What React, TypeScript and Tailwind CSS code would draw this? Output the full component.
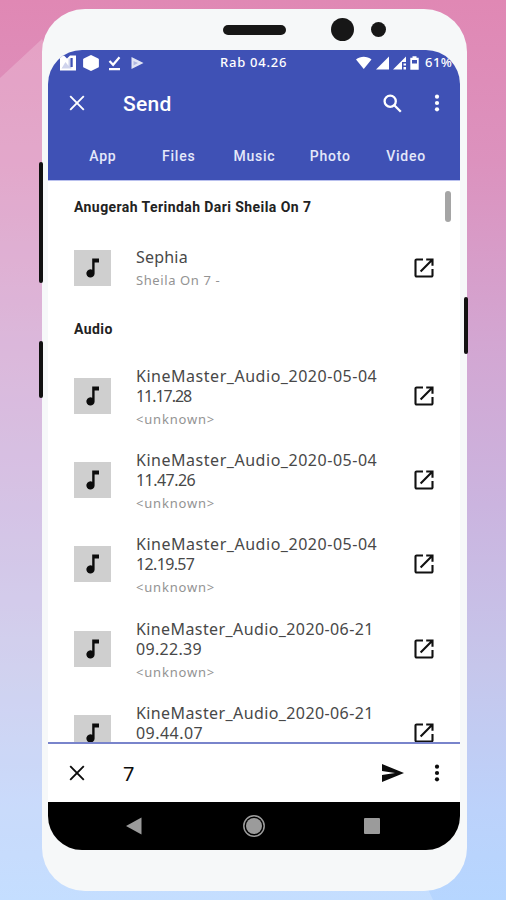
import React from "react";

const songs = [
  { title: "KineMaster_Audio_2020-05-04", time: "11.17.28", artist: "<unknown>", titleSpacing: "tracking-[0.53px]", timeSpacing: "tracking-[-1.05px]" },
  { title: "KineMaster_Audio_2020-05-04", time: "11.47.26", artist: "<unknown>", titleSpacing: "tracking-[0.53px]", timeSpacing: "tracking-[-0.55px]" },
  { title: "KineMaster_Audio_2020-05-04", time: "12.19.57", artist: "<unknown>", titleSpacing: "tracking-[0.53px]", timeSpacing: "tracking-[-0.65px]" },
  { title: "KineMaster_Audio_2020-06-21", time: "09.22.39", artist: "<unknown>", titleSpacing: "tracking-[0.4px]", timeSpacing: "tracking-[0.3px]" },
  { title: "KineMaster_Audio_2020-06-21", time: "09.44.07", artist: "", titleSpacing: "tracking-[0.4px]", timeSpacing: "tracking-[0.45px]" },
];

const tabs = ["App", "Files", "Music", "Photo", "Video"];

const CloseIcon = () => (
  <svg viewBox="0 0 16 16" className="w-4 h-4 shrink-0" fill="none" stroke="currentColor" strokeWidth="1.9">
    <path d="M1.2 1.2 14.8 14.8M14.8 1.2 1.2 14.8" />
  </svg>
);

const MoreIcon = () => (
  <svg viewBox="0 0 6 18" className="w-1.5 h-[18px] shrink-0" fill="currentColor">
    <circle cx="3" cy="2.7" r="2.1" />
    <circle cx="3" cy="9" r="2.1" />
    <circle cx="3" cy="15.3" r="2.1" />
  </svg>
);

const NoteTile = () => (
  <div className="w-[37px] h-9 bg-[#cfcfcf] flex items-center justify-center shrink-0">
    <svg viewBox="0 0 14 20" className="w-3.5 h-5" fill="#0c0c0c">
      <path d="M6.2.6h6.8v4H8.6v10.8a4.1 4.1 0 1 1-2.4-3.7z" />
    </svg>
  </div>
);

const OpenIcon = () => (
  <svg viewBox="0 0 20 20" className="w-5 h-5 shrink-0" fill="none" stroke="#111" strokeWidth="2.1">
    <path d="M9 1.5H2.6a1.1 1.1 0 0 0-1.1 1.1v14.8a1.1 1.1 0 0 0 1.1 1.1h14.8a1.1 1.1 0 0 0 1.1-1.1V11" />
    <path d="M12.2 1.5h6.3v6.3M18 2 6.6 13.4" />
  </svg>
);

const StatusBar = () => (
  <div className="h-6 shrink-0 flex items-center pt-px text-white font-['Noto_Sans'] text-[13px] font-medium">
    <div className="w-[172px] flex items-center pl-[11px]">
      <svg viewBox="0 0 90 18" className="w-[90px] h-[18px]" fill="currentColor">
        {/* photo notification */}
        <path d="M1 1.5h4l3 3 3-3h6v15H1z" />
        <path d="M2.5 14.5 6.5 8l3 4V4.5h3v10z" fill="#3f51b5" opacity=".25" />
        <path d="M11.5 4h2.2v9h-2.2z" fill="#3f51b5" />
        <path d="m32 2.2 6.7 3.4v6.8L32 15.8l-6.7-3.4V5.6z" stroke="currentColor" strokeWidth="2.4" strokeLinejoin="round" />
        <path d="m50.5 7 3.6 3.8 6.4-7.6" fill="none" stroke="currentColor" strokeWidth="2.2" />
        <path d="M50 14h11v2.3H50z" />
        <path d="m72.5 3 12 6-12 6z" opacity=".85" />
        <path d="m74.5 7 4.5 2-4.5 2.5z" fill="#3f51b5" opacity=".3" />
      </svg>
    </div>
    <span className="w-[135px] tracking-[0.75px]">Rab 04.26</span>
    <svg viewBox="0 0 66 16" className="w-[66px] h-4 shrink-0" fill="currentColor">
      <path d="M1 4.5C5.5.8 12 .8 16.500 4.5L8.75 14z" />
      <path d="M21 14.5 34 1.5v13z" />
      <path d="M38 14.5 51 1.5V7h-4v7.5z" />
      <path d="M48.5 8.5H51v2h-2.5zM48.5 12H51v2.5h-2.5z" />
      <path d="M57.5 1.2h4v1.6h2.2v12h-8.4v-12h2.2z" />
      <path d="M57 5h5v3.5h-5z" fill="#3f51b5" />
    </svg>
    <span className="ml-1 tracking-[0.5px]">61%</span>
  </div>
);

type Song = (typeof songs)[number];

const SongRow = ({ title, time, artist, titleSpacing, timeSpacing }: Song) => (
  <div className="h-[84.2px] shrink-0 flex items-center px-[26px]">
    <NoteTile />
    <div className="flex-1 pl-[25px] pt-0.5 font-['Noto_Sans']">
      <div className={`text-base leading-[21px] text-[#484848] whitespace-nowrap ${titleSpacing}`}>{title}</div>
      <div className={`text-base leading-[18px] text-[#484848] ${timeSpacing}`}>{time}</div>
      <div className="h-[18px] text-[13px] leading-[18px] mt-[5px] text-[#939393] tracking-[0.8px]">{artist}</div>
    </div>
    <OpenIcon />
  </div>
);

const App = () => {
  return (
    <div className="relative w-[506px] h-[900px] overflow-hidden pt-[9px] pl-[42px] bg-[linear-gradient(to_bottom,#e088b4_0%,#dc92be_18%,#d3a6d2_38%,#cbb4df_56%,#c6c6eb_74%,#bcd2fb_90%,#b6d6ff_100%)]">
      {/* lighter diagonal sheen */}
      <div className="absolute inset-0 bg-white/20 [clip-path:polygon(0_78px,42px_39px,433px_900px,0_900px)]"></div>

      {/* hardware buttons */}
      <div className="absolute left-[39px] top-[162px] w-1 h-[121px] rounded-sm bg-[#111] z-10"></div>
      <div className="absolute left-[39px] top-[341px] w-1 h-[57px] rounded-sm bg-[#111] z-10"></div>
      <div className="absolute left-[464px] top-[297px] w-1 h-[57px] rounded-sm bg-[#111] z-10"></div>

      <div className="relative w-[425px] h-[882px] rounded-[43px] bg-[#f6f8f9] pl-1.5 flex flex-col">
        <div className="h-[41px] shrink-0 flex items-center pl-[175px]">
          <div className="w-[63px] h-2.5 rounded-full bg-[#171717]"></div>
          <div className="w-[23px] h-[23px] ml-[45px] rounded-full bg-[#171717]"></div>
          <div className="w-[15px] h-[15px] ml-[17px] rounded-full bg-[#171717]"></div>
        </div>

        <div className="w-[412px] h-[800px] rounded-[34px] overflow-hidden bg-white flex flex-col">
          <div className="h-[130px] shrink-0 bg-[#3f51b5] flex flex-col text-white">
            <StatusBar />
            <div className="h-[58px] flex items-center pl-[21px] pr-5">
              <CloseIcon />
              <h1 className="flex-1 pl-[38px] pt-0.5 font-[Roboto] font-medium text-[21px] leading-7 tracking-[0.3px]">Send</h1>
              <svg viewBox="0 0 19 19" className="w-[19px] h-[19px] mr-8" fill="none" stroke="currentColor" strokeWidth="2.3">
                <circle cx="7.2" cy="7.2" r="5.6" />
                <path d="m11.3 11.3 6.5 6.5" />
              </svg>
              <MoreIcon />
            </div>
            <div className="flex-1 flex items-center pl-[17px] pr-4">
              {tabs.map((tab) => (
                <span key={tab} className="flex-1 text-center font-[Roboto] font-medium text-sm tracking-[0.75px] text-[#e4e8fa]">
                  {tab}
                </span>
              ))}
            </div>
          </div>

          <div className="relative h-[562px] shrink-0 overflow-hidden border-t border-[#b9c0ee] flex flex-col">
            <div className="absolute right-[9.5px] top-[10px] w-1.5 h-[31px] rounded-full bg-[#a5a5a5]"></div>
            <h2 className="h-[52px] shrink-0 flex items-center pl-[26px] font-[Roboto] font-bold text-sm text-[#222] tracking-[0.42px]">
              Anugerah Terindah Dari Sheila On 7
            </h2>
            <div className="h-[70px] shrink-0 flex items-center px-[26px]">
              <NoteTile />
              <div className="flex-1 pl-[25px] font-['Noto_Sans']">
                <div className="text-base leading-5 text-[#484848] tracking-[0.2px]">Sephia</div>
                <div className="text-[13px] leading-[18px] mt-1 text-[#939393] tracking-[0.6px]">Sheila On 7 -</div>
              </div>
              <OpenIcon />
            </div>
            <h2 className="h-[51px] shrink-0 flex items-center pl-[26px] font-[Roboto] font-bold text-sm text-[#222] tracking-[0.42px]">
              Audio
            </h2>
            {songs.map((song) => (
              <SongRow key={song.time} {...song} />
            ))}
          </div>

          <div className="h-[60px] shrink-0 border-t-2 border-[#7984cb] flex items-center pl-[21px] pr-5 text-[#0c0c0c]">
            <CloseIcon />
            <span className="flex-1 pl-[38px] pt-0.5 font-['Noto_Sans'] text-xl">7</span>
            <svg viewBox="0 0 22 18" className="w-[22px] h-[18px] mr-[30px]" fill="currentColor">
              <path d="M0 0 22 9 0 18v-7l13-2L0 7z" />
            </svg>
            <MoreIcon />
          </div>

          <div className="flex-1 bg-black flex items-center pl-[78px]">
            <svg viewBox="0 0 16 18" className="w-4 h-[18px]" fill="#9b9b9b">
              <path d="M15.5.5v17L0 9z" />
            </svg>
            <svg viewBox="0 0 24 24" className="w-6 h-6 ml-[100px]">
              <circle cx="12" cy="12" r="10.2" fill="none" stroke="#9b9b9b" strokeWidth="1.5" />
              <circle cx="12" cy="12" r="8" fill="#9b9b9b" />
            </svg>
            <div className="w-4 h-4 ml-[98px] bg-[#9b9b9b] rounded-[1px]"></div>
          </div>
        </div>
      </div>
    </div>
  );
};

export default App;
